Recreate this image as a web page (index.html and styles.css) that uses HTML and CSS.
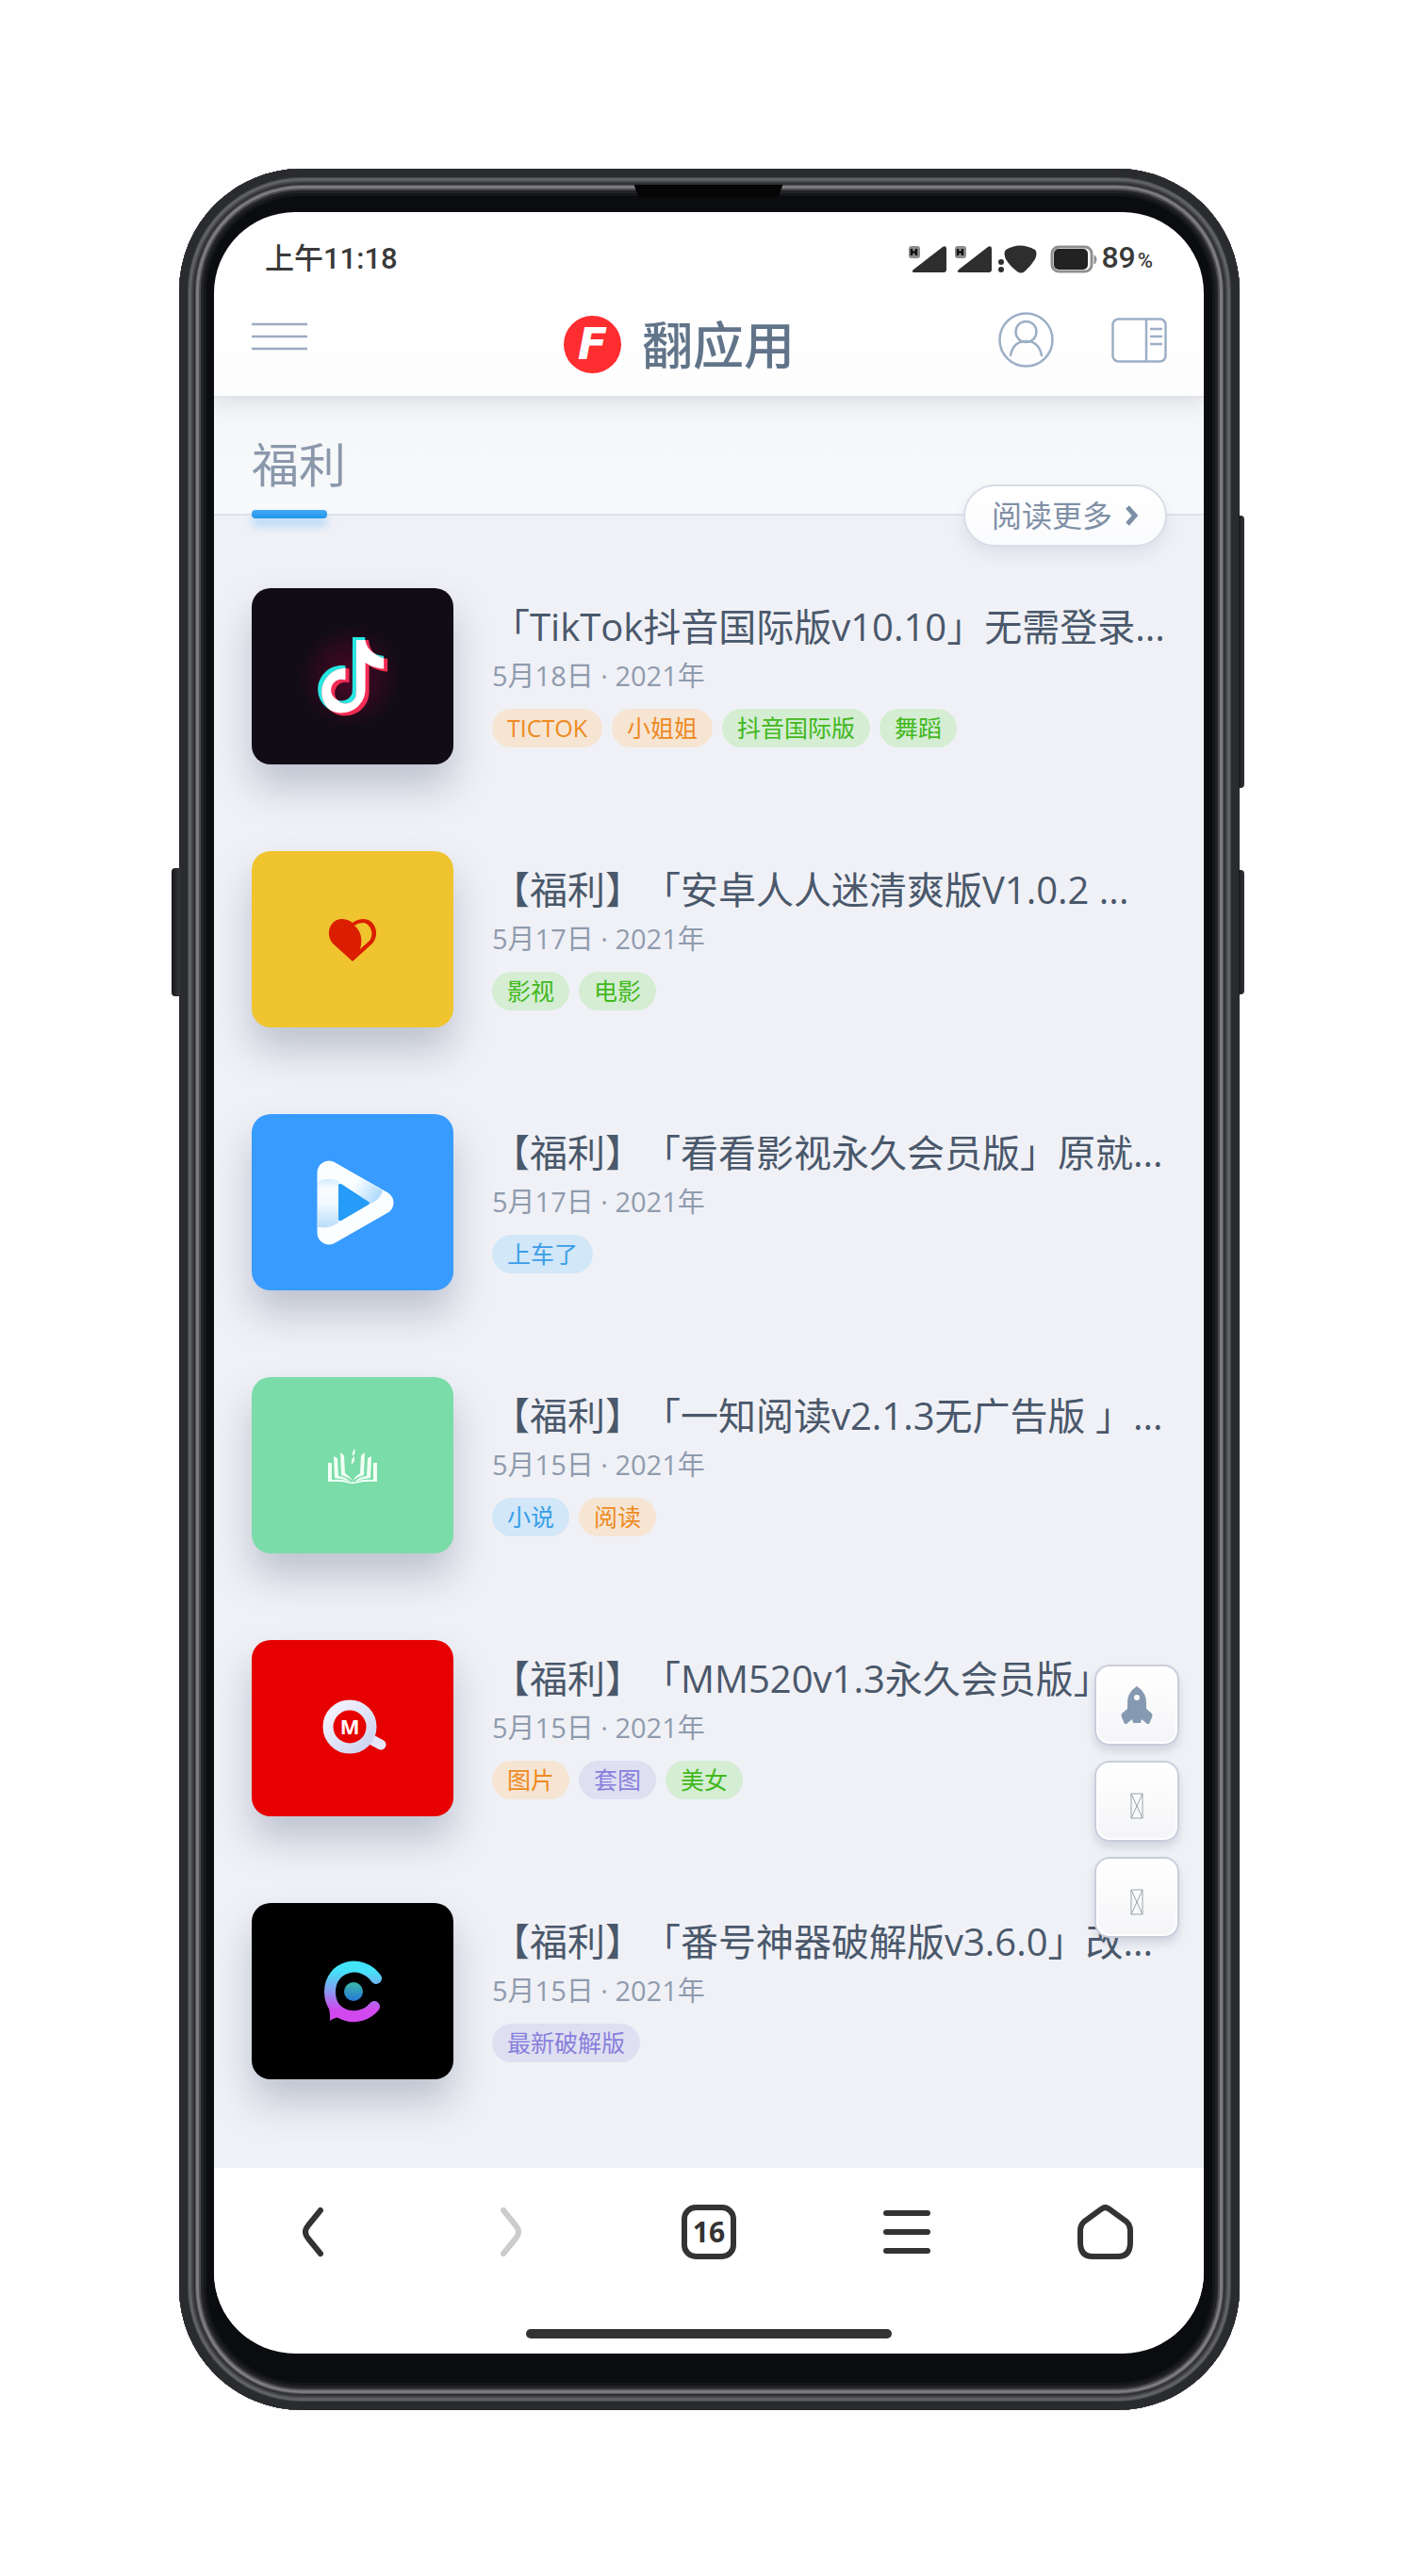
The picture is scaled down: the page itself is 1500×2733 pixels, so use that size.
FILE: index.html
```html
<!DOCTYPE html>
<html lang="zh-CN">
<head>
<meta charset="utf-8">
<meta name="viewport" content="width=device-width, initial-scale=1">
<title>翻应用 - 福利</title>
<link rel="stylesheet" href="styles.css">
</head>
<body>
<div class="phone">
  <span class="speaker"></span>
  <span class="side-key side-key-left"></span>
  <span class="side-key side-key-volume"></span>
  <span class="side-key side-key-power"></span>
  <div class="screen">
    <div class="status">
      <span class="clock">上午11:18</span>
      <div class="status-icons">
        <svg class="status-glyphs" width="200" height="30" viewBox="0 0 200 30" aria-hidden="true">
          <g fill="#2e2e2e">
            <path d="M5 26 36 2q4-2 4 2V26q0 3-3 3H6q-4 0-1-3z"/>
            <path d="M53 26 84 2q4-2 4 2V26q0 3-3 3H54q-4 0-1-3z"/>
            <circle cx="98" cy="18" r="3"/><circle cx="98" cy="26" r="3"/>
            <path d="M103 5q15-9 31 0 3 3 0 10-5 8-11 13-4 3-8 0-8-6-12-13-3-7 0-10z"/>
          </g>
          <g fill="#8c8c8c"><rect y="1" width="12" height="13" rx="3"/><rect x="49" y="1" width="12" height="13" rx="3"/></g>
          <path d="M3 4v7M8 4v7M3 7.500h5M52 4v7M57 4v7M52 7.500h5" stroke="#111" stroke-width="2.500"/>
          <rect x="152" y="2" width="42" height="26" rx="7" fill="#fff" stroke="#8f8f8f" stroke-width="3"/>
          <path d="M197 11q4 4 0 9z" fill="#8f8f8f" stroke="#8f8f8f"/>
          <rect x="154" y="4" width="36" height="22" rx="5" fill="#222"/>
        </svg>
        <span class="battery">89<small>%</small></span>
      </div>
    </div>
    <header class="header">
      <button class="icon-button menu" aria-label="菜单">
        <svg width="59" height="30" viewBox="0 0 59 30"><path d="M0 2h59M0 15h59M0 28h59" stroke="#9dabc2" stroke-width="2.500"/></svg>
      </button>
      <a class="logo" href="#"><span class="logo-mark">F</span><span class="logo-name">翻应用</span></a>
      <div class="header-actions">
        <button class="icon-button" aria-label="用户">
          <svg width="59" height="59" viewBox="0 0 59 59" fill="none" stroke="#9dafc6" stroke-width="2.500"><circle cx="29.500" cy="29.500" r="28"/><circle cx="29.500" cy="21" r="11"/><path d="M13 46q3-15 16.500-15T46 46" stroke-linecap="round"/></svg>
        </button>
        <button class="icon-button" aria-label="侧栏">
          <svg width="59" height="48" viewBox="0 0 59 48" fill="none" stroke="#9dafc6" stroke-width="2.500"><rect x="1.500" y="1.500" width="56" height="45" rx="6"/><path d="M37 2v44M41 12h13M41 20h13M41 28h13"/></svg>
        </button>
      </div>
    </header>
    <main class="content">
      <div class="section-head">
        <h1 class="section-title">福利</h1>
        <a class="more" href="#">阅读更多<svg width="14" height="22" viewBox="0 0 14 22" fill="none" stroke="#7d8fa6" stroke-width="5"><path d="m2 2 8 9-8 9"/></svg></a>
      </div>
      <div class="list">
        <article class="item">
          <a class="thumb thumb-tiktok" href="#" aria-label="TikTok">
            <svg viewBox="0 0 214 187">
              <defs>
                <radialGradient id="glow"><stop offset="0" stop-color="#4a0626"/><stop offset=".6" stop-color="#2a0a1c"/><stop offset="1" stop-color="#120c16"/></radialGradient>
                <path id="note" d="M12.525.02c1.310-.020 2.610-.010 3.910-.020.080 1.530.630 3.090 1.750 4.170 1.120 1.110 2.700 1.620 4.240 1.790v4.030c-1.440-.050-2.890-.350-4.200-.970-.570-.260-1.100-.590-1.620-.930-.010 2.920.010 5.840-.020 8.750-.080 1.400-.540 2.790-1.350 3.940-1.310 1.920-3.580 3.170-5.910 3.210-1.430.080-2.860-.310-4.080-1.030-2.020-1.190-3.440-3.370-3.650-5.710-.020-.500-.030-1-.010-1.490.180-1.900 1.120-3.720 2.580-4.960 1.660-1.440 3.980-2.130 6.150-1.720.020 1.480-.040 2.960-.040 4.440-.990-.320-2.150-.230-3.020.370-.630.410-1.110 1.040-1.360 1.750-.210.510-.150 1.070-.140 1.610.240 1.640 1.820 3.020 3.500 2.870 1.120-.010 2.190-.660 2.770-1.610.190-.330.400-.670.410-1.060.100-1.790.060-3.570.070-5.360.010-4.030-.010-8.050.020-12.070z"/>
                <clipPath id="note-clip"><use href="#note" transform="translate(65 52) scale(3.350)"/></clipPath>
              </defs>
              <circle cx="104" cy="94" r="54" fill="url(#glow)"/>
              <use href="#note" transform="translate(65 52) scale(3.350)" fill="#25e8e2"/>
              <use href="#note" transform="translate(69 55) scale(3.350)" fill="#f22c55"/>
              <g clip-path="url(#note-clip)"><use href="#note" transform="translate(69 55) scale(3.350)" fill="#fff"/></g>
            </svg>
          </a>
          <div class="info">
            <h2 class="title">「TikTok抖音国际版v10.10」无需登录...</h2>
            <p class="date">5月18日 · 2021年</p>
            <div class="tags"><a class="tag orange" href="#">TICTOK</a><a class="tag orange" href="#">小姐姐</a><a class="tag green" href="#">抖音国际版</a><a class="tag green" href="#">舞蹈</a></div>
          </div>
        </article>
        <article class="item">
          <a class="thumb thumb-heart" href="#" aria-label="安卓人人迷">
            <svg viewBox="0 0 214 187">
              <path d="M107 117 86 98C78 89 82 73 95 72q7 0 12 4 5-4 12-4c13 1 17 17 9 26z" fill="#dc1e00"/>
              <path d="M109 79C116 85 118 93 115 104L125 95C130 89 127 77 118 76q-5 0-9 3z" fill="#efc42f"/>
            </svg>
          </a>
          <div class="info">
            <h2 class="title">【福利】「安卓人人迷清爽版V1.0.2 ...</h2>
            <p class="date">5月17日 · 2021年</p>
            <div class="tags"><a class="tag green" href="#">影视</a><a class="tag green" href="#">电影</a></div>
          </div>
        </article>
        <article class="item">
          <a class="thumb thumb-play" href="#" aria-label="看看影视">
            <svg viewBox="0 0 214 187">
              <defs>
                <linearGradient id="fold-side" x1="0" y1="0" x2="0" y2="1"><stop offset="0" stop-color="#d3ebfd"/><stop offset=".2" stop-color="#f8fdff"/><stop offset=".5" stop-color="#f2faff"/><stop offset="1" stop-color="#b9dcfb"/></linearGradient>
                <linearGradient id="fold-top" x1="0" y1="0" x2="1" y2=".5"><stop offset=".45" stop-color="#fbfeff"/><stop offset="1" stop-color="#b4ddfb"/></linearGradient>
              </defs>
              <path d="M82 62v64l56-32z" fill="#2aa0f8" stroke="#fbfeff" stroke-width="25" stroke-linejoin="round"/>
              <path d="M70 72q10-6 22-1v44q-8 7-22 5z" fill="url(#fold-side)"/>
              <path d="M98 58 139 81q-2 10-15 15L92 75z" fill="url(#fold-top)"/>
              <path d="M92 75v37q1 2 3 1l29-17q2-2 0-3L95 74q-2-1-3 1z" fill="#259cf7"/>
            </svg>
          </a>
          <div class="info">
            <h2 class="title">【福利】「看看影视永久会员版」原就...</h2>
            <p class="date">5月17日 · 2021年</p>
            <div class="tags"><a class="tag blue" href="#">上车了</a></div>
          </div>
        </article>
        <article class="item">
          <a class="thumb thumb-book" href="#" aria-label="一知阅读">
            <svg viewBox="0 0 214 187">
              <g id="pages" fill="#f1fff4">
                <path d="M81 91h4v18q14-1 20 3l-1 1q-8-3-23-2z"/>
                <path d="m87 84 4 2 1 19q8 1 13 6-7-3-17-4z"/>
                <path d="m94 80 4 3 1 19q5 3 8 8-5-4-12-6z"/>
              </g>
              <use href="#pages" transform="matrix(-1 0 0 1 214 0)"/>
              <path d="M104 112q3-2 6 0l-1 1h-4zM109 76q2 5-2 8-1-4 2-8zM109 84q1 5-3 9-1-6 3-9z" fill="#f1fff4"/>
            </svg>
          </a>
          <div class="info">
            <h2 class="title">【福利】「一知阅读v2.1.3无广告版 」...</h2>
            <p class="date">5月15日 · 2021年</p>
            <div class="tags"><a class="tag blue" href="#">小说</a><a class="tag orange" href="#">阅读</a></div>
          </div>
        </article>
        <article class="item">
          <a class="thumb thumb-lens" href="#" aria-label="MM520">
            <svg viewBox="0 0 214 187">
              <defs><linearGradient id="lens" x1="0" y1="0" x2="1" y2="1"><stop offset="0" stop-color="#f6f4ff"/><stop offset="1" stop-color="#ccd3f0"/></linearGradient></defs>
              <path d="M124 104 137 111" stroke="#e6e8fa" stroke-width="11" stroke-linecap="round"/>
              <circle cx="104" cy="92" r="23" fill="none" stroke="url(#lens)" stroke-width="11"/>
              <text x="104" y="100" text-anchor="middle" class="lens-letter">M</text>
            </svg>
          </a>
          <div class="info">
            <h2 class="title">【福利】「MM520v1.3永久会员版」...</h2>
            <p class="date">5月15日 · 2021年</p>
            <div class="tags"><a class="tag orange" href="#">图片</a><a class="tag purple" href="#">套图</a><a class="tag green" href="#">美女</a></div>
          </div>
        </article>
        <article class="item">
          <a class="thumb thumb-chat" href="#" aria-label="番号神器">
            <svg viewBox="0 0 214 187">
              <defs>
                <linearGradient id="ring" gradientUnits="userSpaceOnUse" x1="0" y1="62" x2="0" y2="126"><stop offset=".15" stop-color="#43e4f8"/><stop offset=".45" stop-color="#7ea4f0"/><stop offset=".8" stop-color="#d149ee"/></linearGradient>
                <linearGradient id="dot" x1="0" y1="0" x2="0" y2="1"><stop offset="0" stop-color="#3cb9ab"/><stop offset="1" stop-color="#2678d8"/></linearGradient>
              </defs>
              <path d="M132 80C116 58 83 67 83 94c0 28 32 34 47 16" fill="none" stroke="url(#ring)" stroke-width="12" stroke-linecap="round"/>
              <path d="M78 102q6 10 5 23 6-5 13-3l2-10z" fill="url(#ring)"/>
              <circle cx="108" cy="94" r="10" fill="url(#dot)"/>
            </svg>
          </a>
          <div class="info">
            <h2 class="title">【福利】「番号神器破解版v3.6.0」改...</h2>
            <p class="date">5月15日 · 2021年</p>
            <div class="tags"><a class="tag purple" href="#">最新破解版</a></div>
          </div>
        </article>
      </div>
      <div class="floating">
        <button class="float-button" aria-label="返回顶部">
          <svg width="34" height="40" viewBox="0 0 34 40" fill="#8599b1"><path fill-rule="evenodd" d="M17 0q11 7 10 20v4l6 5q1 2 0 4l-3 7h-2l-6-5-1 4h-8l-1-4-6 5H4L1 33q-1-2 0-4l6-5v-4Q6 7 17 0zm0 9a3 3 0 1 0 0 6 3 3 0 1 0 0-6z"/></svg>
        </button>
        <button class="float-button low" aria-label="搜索">
          <svg width="14" height="28" viewBox="0 0 14 28" fill="none" stroke="#9ba3ad"><path d="M1 1h12v26H1zL13 27M13 1 1 27"/></svg>
        </button>
        <button class="float-button low" aria-label="夜间模式">
          <svg width="14" height="28" viewBox="0 0 14 28" fill="none" stroke="#9ba3ad"><path d="M1 1h12v26H1zL13 27M13 1 1 27"/></svg>
        </button>
      </div>
    </main>
    <nav class="browser-bar">
      <div class="browser-buttons">
        <button class="icon-button" aria-label="后退"><svg width="22" height="54" viewBox="0 0 22 54" fill="none" stroke="#333" stroke-width="6" stroke-linecap="round"><path d="M19 4 6 20q-6 7 0 14l13 16"/></svg></button>
        <button class="icon-button" aria-label="前进"><svg width="22" height="54" viewBox="0 0 22 54" fill="none" stroke="#ccc" stroke-width="6" stroke-linecap="round"><path d="m3 4 13 16q6 7 0 14L3 50"/></svg></button>
        <button class="icon-button tabs" aria-label="16 个标签页">16</button>
        <button class="icon-button" aria-label="工具"><svg width="52" height="48" viewBox="0 0 52 48" stroke="#333" stroke-width="6" stroke-linecap="round"><path d="M4 4h44M4 24h44M4 44h44"/></svg></button>
        <button class="icon-button" aria-label="主页"><svg width="59" height="58" viewBox="0 0 59 58" fill="none" stroke="#333" stroke-width="6"><path d="M25 5q4.500-4 9 0l18 13q4 4 4 9v13q0 15-13 15H16Q3 55 3 40V27q0-5 4-9z"/></svg></button>
      </div>
      <div class="home-indicator"></div>
    </nav>
  </div>
</div>
</body>
</html>
```
FILE: styles.css
```css
* { box-sizing: border-box; }

body {
  margin: 0;
  padding: 179px 185px 176px 190px;
  background: #fefefe;
  font-family: "Open Sans", "Noto Sans CJK SC", sans-serif;
  text-spacing-trim: space-all;
}

a { color: inherit; text-decoration: none; }
h1, h2, p { margin: 0; font-weight: 400; }

.phone {
  position: relative;
  padding: 46px 38px 60px 37px;
  border-radius: 130px;
  background: #0b0c10;
  box-shadow:
    inset 0 0 0 9px #2a2b2e,
    inset 0 0 0 10px #46474b,
    inset 0 0 0 13px #606166,
    inset 0 0 0 15px #45464a,
    inset 0 0 0 17px #303135,
    inset 0 0 0 18px #505055,
    inset 0 0 0 21px #7b7b80,
    inset 0 0 0 23px #4a4a4f,
    inset 0 0 0 26px #222327,
    inset 0 0 0 29px #15161a;
}

.speaker {
  position: absolute;
  top: 17px;
  left: 50%;
  width: 158px;
  height: 13px;
  margin-left: -80px;
  background: #050506;
  clip-path: polygon(0 0, 100% 0, 97% 100%, 3% 100%);
}

.side-key {
  position: absolute;
  right: -5px;
  width: 6px;
  background: linear-gradient(90deg, #18191c, #36373b);
  border-radius: 0 4px 4px 0;
}
.side-key-volume { top: 368px; height: 289px; }
.side-key-power { top: 744px; height: 132px; }
.side-key-left {
  top: 742px;
  right: auto;
  left: -8px;
  width: 9px;
  height: 136px;
  border-radius: 4px 0 0 4px;
}

.screen {
  overflow: hidden;
  border-radius: 86px;
  background: #fff;
}

.status {
  display: flex;
  align-items: center;
  justify-content: space-between;
  height: 100px;
  padding: 0 54px;
  color: #3a3a3a;
}
.clock {
  font: 500 31px/40px Roboto, "Noto Sans CJK SC", sans-serif;
}
.status-icons { display: flex; align-items: center; gap: 4px; }
.status-glyphs { display: block; }
.battery { font: 500 32px/40px Roboto, sans-serif; }
.battery small { margin-left: 2px; font-size: 22px; }

.icon-button {
  display: flex;
  align-items: center;
  justify-content: center;
  padding: 0;
  border: 0;
  background: none;
}

.header {
  position: relative;
  z-index: 1;
  display: grid;
  grid-template-columns: 1fr auto 1fr;
  align-items: center;
  height: 97px;
  padding: 0 39px 24px 40px;
  background: linear-gradient(#fff, #fdfdfe);
  border-bottom: 2px solid #e2e4e6;
  box-shadow: 0 6px 20px rgba(120, 135, 155, .2);
  clip-path: inset(0 0 -40px 0);
}
.menu { justify-self: start; margin-bottom: 8px; }
.logo {
  display: flex;
  align-items: center;
  gap: 22px;
  padding: 10px 64px 0 0;
}
.logo-mark {
  width: 61px;
  height: 61px;
  border-radius: 50%;
  background: #fd2d30;
  color: #fff;
  font: italic 700 46px/60px "DejaVu Sans", sans-serif;
  text-align: center;
}
.logo-name {
  color: #617489;
  font-size: 54px;
  font-weight: 500;
  line-height: 60px;
}
.header-actions { display: flex; align-items: center; justify-content: flex-end; gap: 61px; }

.content { position: relative; background: #f0f1f6; }

.section-head {
  display: flex;
  justify-content: space-between;
  height: 125px;
  padding: 0 39px 0 40px;
  background: linear-gradient(#f4f6f8, #f8f9fb);
  border-bottom: 2px solid #dde3eb;
}
.section-title {
  position: relative;
  padding-top: 36px;
  color: #8b98ac;
  font-size: 50px;
  line-height: 70px;
}
.section-title::after {
  content: "";
  position: absolute;
  left: 0;
  bottom: -5px;
  width: 80px;
  height: 9px;
  border-radius: 4px;
  background: linear-gradient(#45a9f3, #2196eb);
  box-shadow: 0 8px 10px rgba(60, 165, 250, .35);
}
.more {
  display: flex;
  align-items: center;
  gap: 14px;
  height: 66px;
  margin-top: 92px;
  padding: 0 28px;
  border: 2px solid #d7dce7;
  border-radius: 33px;
  background: linear-gradient(#fff, #fafbfd);
  box-shadow: 0 8px 16px rgba(120, 135, 165, .16);
  color: #8090a6;
  font-size: 32px;
  line-height: 40px;
}

.list {
  display: flex;
  flex-direction: column;
  gap: 92px;
  padding: 77px 39px 94px 40px;
}
.item { display: flex; gap: 41px; }
.thumb {
  flex: none;
  width: 214px;
  height: 187px;
  border-radius: 20px;
  box-shadow: 0 24px 40px rgba(80, 95, 125, .32);
}
.thumb svg { display: block; width: 100%; height: 100%; }
.thumb-tiktok { background: #120c16; }
.thumb-heart { background: #efc42f; }
.thumb-play { background: #389bff; }
.thumb-book { background: #7adca8; }
.thumb-lens { background: #e60000; }
.thumb-chat { background: #000; }
.lens-letter { fill: #fff; font: 700 22px "Open Sans", sans-serif; }

.info { flex: 1; min-width: 0; padding-top: 14px; }
.title {
  color: #4a586b;
  font-size: 40px;
  line-height: 54px;
  white-space: nowrap;
}
.date {
  padding-top: 5px;
  color: #8f9bae;
  font-size: 29px;
  line-height: 40px;
}
.tags { display: flex; gap: 10px; padding-top: 15px; }
.tag {
  padding: 0 16px;
  border-radius: 21px;
  font-size: 25px;
  line-height: 41px;
}
.orange { background: #f6e5d3; color: #ee8a22; }
.green { background: #d4edd3; color: #42b81c; }
.blue { background: #d2e7f8; color: #3a9ee8; }
.purple { background: #dfdff2; color: #897fdc; }

.floating {
  position: absolute;
  right: 26px;
  bottom: 244px;
  display: flex;
  flex-direction: column;
  gap: 16px;
}
.float-button {
  display: flex;
  align-items: center;
  justify-content: center;
  width: 90px;
  height: 86px;
  padding: 0;
  border: 2px solid #c9cddb;
  border-radius: 16px;
  background: linear-gradient(#fff, #f4f5f7);
  box-shadow: inset 0 0 0 2px #fff, 0 6px 10px rgba(90, 105, 135, .2);
}
.low { padding-top: 10px; }

.browser-bar { padding-top: 38px; background: #fff; }
.browser-buttons {
  display: grid;
  grid-template-columns: repeat(5, 1fr);
  place-items: center;
  height: 60px;
}
.tabs {
  width: 58px;
  height: 58px;
  border: 6px solid #333;
  border-radius: 15px;
  color: #333;
  font: 700 30px/40px "Open Sans", sans-serif;
}
.home-indicator {
  width: 37%;
  height: 10px;
  margin: 73px auto 16px;
  border-radius: 5px;
  background: #333;
}
```
